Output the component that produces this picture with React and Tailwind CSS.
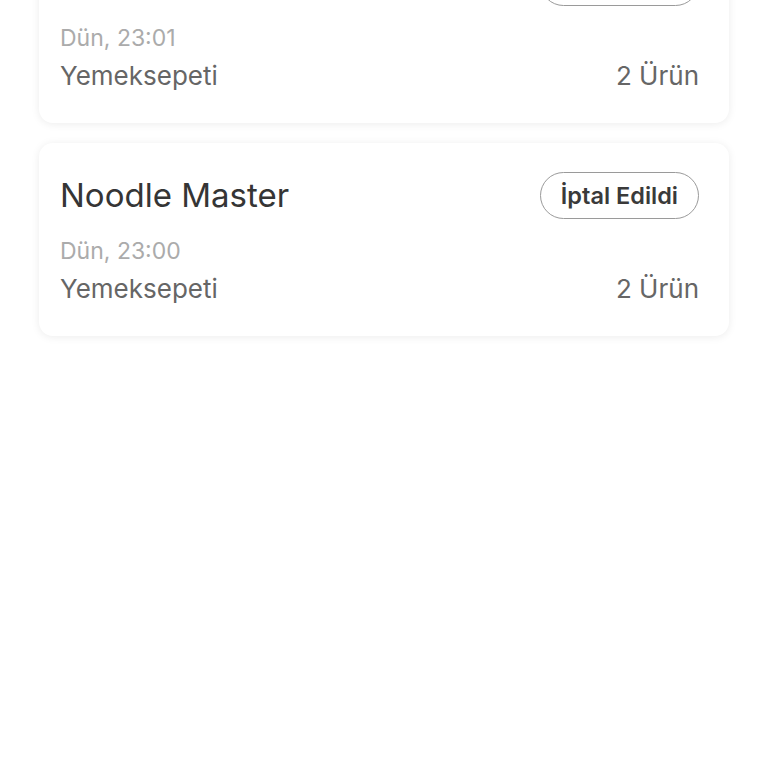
const orders = [
  { name: "Sushi House", status: "İptal Edildi", date: "Dün, 23:01", source: "Yemeksepeti", count: "2 Ürün" },
  { name: "Noodle Master", status: "İptal Edildi", date: "Dün, 23:00", source: "Yemeksepeti", count: "2 Ürün" },
];

function OrderCard({ order }) {
  return (
    <div className="bg-white rounded-[14px] shadow-[0_1px_8px_rgba(0,0,0,0.08)] pt-[29px] pb-[30px] pl-[21px] pr-[30px]">
      <div className="flex items-center justify-between h-[47px]">
        <span className="text-[33px] leading-none text-[#353535]">{order.name}</span>
        <span className="h-[47px] px-[20px] flex items-center rounded-full border-[1.5px] border-[#9a9a9a] text-[23.5px] font-semibold text-[#3a3a3a]">
          {order.status}
        </span>
      </div>
      <div className="mt-[17px] text-[23px] leading-[30px] text-[#ababab]">{order.date}</div>
      <div className="mt-[6px] flex justify-between text-[26px] leading-[34px] text-[#666]">
        <span>{order.source}</span>
        <span>{order.count}</span>
      </div>
    </div>
  );
}

export default function App() {
  return (
    <div className="w-[768px] h-[768px] bg-white overflow-hidden" style={{ fontFamily: "Inter, 'Liberation Sans', sans-serif" }}>
      <div className="mt-[-70px] px-[39px] flex flex-col gap-[20px]">
        {orders.map((o, i) => (
          <OrderCard key={i} order={o} />
        ))}
      </div>
    </div>
  );
}
